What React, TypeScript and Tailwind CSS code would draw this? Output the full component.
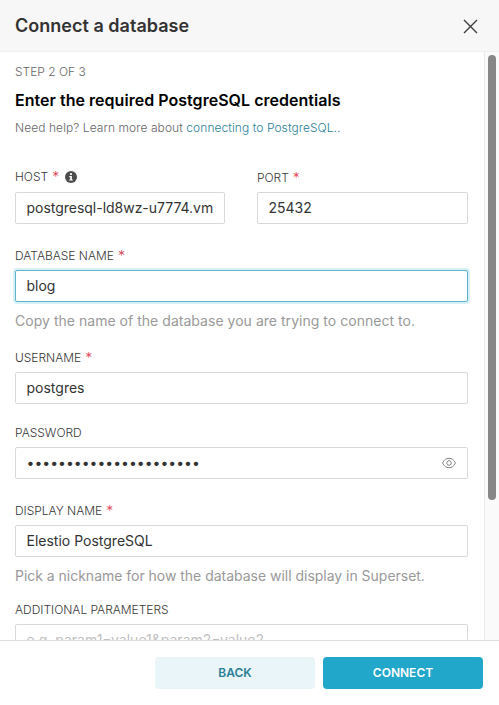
import type { ReactNode } from 'react';

type FieldProps = {
  label: string;
  value?: string;
  required?: boolean;
  focused?: boolean;
  info?: boolean;
  className?: string;
  boxClass?: string;
  valueClass?: string;
  helper?: string;
  helperClass?: string;
  children?: ReactNode;
};

function InfoIcon() {
  return (
    <svg viewBox="0 0 12 12" className="ml-1.5 size-3">
      <circle cx="6" cy="6" r="6" fill="#4c4c4c" />
      <circle cx="6" cy="3.1" r="1.1" fill="#fff" />
      <path d="M4.3 5h2.6v3.4h.9v1.2H4.3V8.4h.9V6.2h-.9z" fill="#fff" />
    </svg>
  );
}

function EyeIcon() {
  return (
    <svg viewBox="0 0 14 12" className="h-3 w-3.5" fill="none" stroke="#858585" strokeWidth="1">
      <path d="M.6 6C2 2.8 4.2 1.3 7 1.3S12 2.8 13.4 6C12 9.2 9.8 10.7 7 10.7S2 9.2.6 6Z" />
      <circle cx="7" cy="6" r="2.3" />
    </svg>
  );
}

function Field({ label, value, required, focused, info, className = '', boxClass = 'mt-1.5', valueClass = 'text-[#333]', helper, helperClass = '', children }: FieldProps) {
  return (
    <div className={className}>
      <div className="flex h-4 items-center text-xs leading-4 text-[#383838]">
        <span className="font-[350] tracking-[-0.02px]">{label}</span>
        {required && <span className="ml-1 text-sm leading-4 font-[350] text-[#e04355]">*</span>}
        {info && <InfoIcon />}
      </div>
      <div
        className={`flex h-8 items-center justify-between rounded-xs border bg-white pr-[11px] pl-[10.5px] text-sm ${boxClass} ${
          focused ? 'border-[#5cb5c8] shadow-[0_0_0_2px_#d8eff5]' : 'border-[#d9d9d9]'
        }`}
      >
        <span className={`whitespace-nowrap ${valueClass}`}>{value}</span>
        {children}
      </div>
      {helper && <p className={`mt-2.5 h-[18px] text-sm leading-[18px] text-[#999] ${helperClass}`}>{helper}</p>}
    </div>
  );
}

export default function App() {
  return (
    <div className="flex h-[705px] w-[499px] flex-col overflow-hidden bg-white font-['Inter',sans-serif]">
      <header className="flex h-[52px] shrink-0 items-center justify-between border-b border-[#f0f0f0] bg-[#f7f7f7] pr-[21px] pl-[15px]">
        <h1 className="text-lg font-semibold tracking-[0.02px] text-[#333]">Connect a database</h1>
        <svg viewBox="0 0 15 15" className="mt-0.5 size-[15px]" stroke="#3c3c3c" strokeWidth="1.4">
          <path d="M1 1l13 13M14 1L1 14" />
        </svg>
      </header>
      <main className="flex h-[588px] shrink-0 overflow-hidden">
        <div className="w-[484px] shrink-0 pt-3 pr-4 pl-[15px]">
          <p className="text-xs leading-4 font-[350] text-[#666]">STEP 2 OF 3</p>
          <h2 className="mt-2 text-base leading-6 font-semibold tracking-[0.03px] text-black">Enter the required PostgreSQL credentials</h2>
          <p className="mt-2 text-xs leading-4 font-[350] tracking-[0.07px] text-[#666]">
            Need help? Learn more about <a className="text-[#2b7f98]">connecting to PostgreSQL..</a>
          </p>
          <div className="mt-[33px] flex items-end justify-between">
            <Field label="HOST" required info value="postgresql-ld8wz-u7774.vm" className="w-[210px]" boxClass="mt-[7px]" valueClass="text-[#333] tracking-[-0.02px]" />
            <Field label="PORT" required value="25432" className="w-[211px]" />
          </div>
          <Field label="DATABASE NAME" required focused value="blog" className="mt-6" helper="Copy the name of the database you are trying to connect to." helperClass="tracking-[0.03px]" />
          <Field label="USERNAME" required value="postgres" className="mt-5" />
          <Field label="PASSWORD" value="••••••••••••••••••••••" className="mt-[21px]">
            <EyeIcon />
          </Field>
          <Field label="DISPLAY NAME" required value="Elestio PostgreSQL" className="mt-6" helper="Pick a nickname for how the database will display in Superset." helperClass="tracking-[-0.02px]" />
          <Field label="ADDITIONAL PARAMETERS" value="e.g. param1=value1&param2=value2" valueClass="text-[#bfbfbf]" className="mt-[17px]" />
        </div>
        <div className="flex flex-1 border-l border-[#e9e9e9] bg-[#fafafa] pt-[3px] pl-[3px]">
          <div className="h-[445px] w-2 rounded-full bg-[#878787]" />
        </div>
      </main>
      <footer className="flex flex-1 items-start justify-end gap-2 border-t border-[#dedede] bg-white pt-4 pr-4 text-xs font-semibold">
        <button className="h-8 w-40 rounded-sm bg-[#e9f5f8] text-[#2b7f98]">BACK</button>
        <button className="h-8 w-40 rounded-sm bg-[#20a7c9] text-white">CONNECT</button>
      </footer>
    </div>
  );
}
